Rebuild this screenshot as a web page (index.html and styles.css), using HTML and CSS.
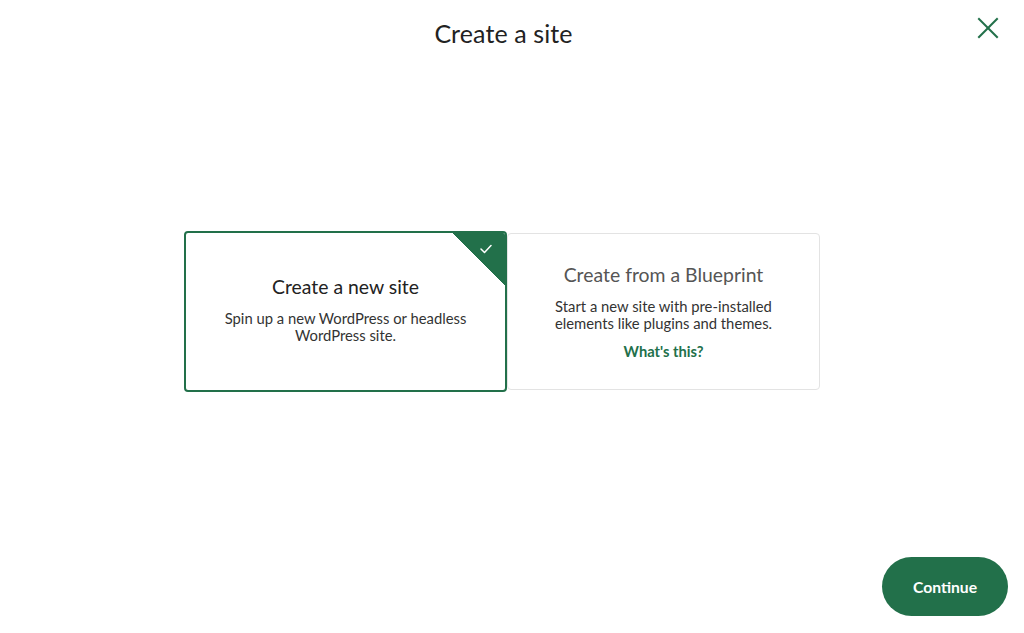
FILE: index.html
```html
<!DOCTYPE html>
<html lang="en">
<head>
    <meta charset="UTF-8">
    <meta name="viewport" content="width=device-width, initial-scale=1.0">
    <title>Create a site</title>
    <link rel="stylesheet" href="styles.css">
</head>
<body>
    <div class="page">
        <header class="top-bar">
            <h1>Create a site</h1>
            <button class="close-btn" aria-label="Close">
                <svg xmlns="http://www.w3.org/2000/svg" width="22" height="22" viewBox="0 0 22 22" fill="none" stroke="#22704a" stroke-width="2" stroke-linecap="square">
                    <line x1="2" y1="2" x2="20" y2="20"></line>
                    <line x1="20" y1="2" x2="2" y2="20"></line>
                </svg>
            </button>
        </header>

        <main class="options">
            <div class="option selected">
                <div class="corner">
                    <svg xmlns="http://www.w3.org/2000/svg" width="12" height="10" viewBox="0 0 12 10" fill="none" stroke="white" stroke-width="1.5" stroke-linecap="round" stroke-linejoin="round">
                        <polyline points="1 5 4.5 8.5 11 1.5"></polyline>
                    </svg>
                </div>
                <h2>Create a new site</h2>
                <p>Spin up a new WordPress or headless WordPress site.</p>
            </div>
            <div class="option">
                <h2>Create from a Blueprint</h2>
                <p>Start a new site with pre-installed elements like plugins and themes.</p>
                <a href="#" class="link">What's this?</a>
            </div>
        </main>

        <footer class="bottom-bar">
            <button class="continue-btn">Continue</button>
        </footer>
    </div>
</body>
</html>
```

FILE: styles.css
```css
* {
    margin: 0;
    padding: 0;
    box-sizing: border-box;
}

body {
    font-family: Lato, 'Open Sans', sans-serif;
    color: #222;
    background: #fff;
    height: 100vh;
    overflow: hidden;
}

.page {
    width: 1008px;
    height: 633px;
    display: flex;
    flex-direction: column;
}

.top-bar {
    position: relative;
    height: 66px;
    display: flex;
    align-items: center;
    justify-content: center;
}

.top-bar h1 {
    font-size: 25px;
    font-weight: 400;
    color: #222;
    letter-spacing: 0.1px;
    margin-right: 1px;
}

.close-btn {
    position: absolute;
    top: 17px;
    right: 9px;
    background: none;
    border: none;
    cursor: pointer;
    display: flex;
}

.options {
    margin-top: 165px;
    display: flex;
    justify-content: center;
    align-items: center;
    padding-right: 4px;
}

.option {
    width: 313px;
    height: 157px;
    border: 1px solid #e3e3e3;
    border-radius: 4px;
    display: flex;
    flex-direction: column;
    align-items: center;
    justify-content: center;
    text-align: center;
    padding: 0 20px;
}

.option h2 {
    font-size: 19.4px;
    font-weight: 400;
    color: #555;
    margin-bottom: 12px;
}

.option p {
    font-size: 14.8px;
    line-height: 17px;
    color: #333;
}

.option .link {
    margin-top: 10px;
    font-size: 14.7px;
    font-weight: 700;
    color: #22704a;
    text-decoration: none;
}

.option.selected {
    position: relative;
    width: 323px;
    height: 161px;
    border: 2px solid #22704a;
    overflow: hidden;
    z-index: 1;
    padding-bottom: 4px;
}

.option.selected h2 {
    color: #222;
}

.corner {
    position: absolute;
    top: 0;
    right: 0;
    width: 52px;
    height: 52px;
    background: linear-gradient(to bottom left, #22704a 50%, transparent 50.5%);
}

.corner svg {
    position: absolute;
    top: 11px;
    right: 13px;
}

.bottom-bar {
    margin-top: auto;
    display: flex;
    justify-content: flex-end;
    padding: 0 0 17px;
}

.continue-btn {
    width: 126px;
    height: 59px;
    border: none;
    border-radius: 30px;
    background: #22704a;
    color: #fff;
    font-family: Lato, 'Open Sans', sans-serif;
    font-size: 15.7px;
    font-weight: 700;
    cursor: pointer;
}
```
